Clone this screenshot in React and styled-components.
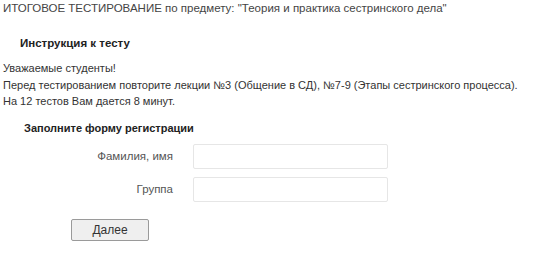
import styled, { createGlobalStyle } from "styled-components"

const Global = createGlobalStyle`
body{
    margin: 0;
    background: #fff;
    font-family: "Liberation Sans", Arial, sans-serif;
    font-size: 11.5px;
    color: #333;
}
`

const Page = styled.div`
    padding: 1px 0 0 3px;
    white-space: nowrap;
`

const Title = styled.div`
    line-height: 14px;
    color: #444;
`

const SectionTitle = styled.h2`
    margin: ${props => props.top}px 0 0 ${props => props.indent}px;
    font-size: ${props => props.size}px;
    font-weight: bold;
    line-height: 14px;
    color: #222;
`

const Notice = styled.div`
    margin-top: 10px;
    font-size: 11px;
    p{
        margin: 0;
        line-height: 16.5px;
    }
`

const Form = styled.form`
    display: grid;
    grid-template-columns: 170px 195px;
    column-gap: 20px;
    row-gap: 8px;
    align-items: center;
    margin-top: 9px;
    label{
        text-align: right;
        color: #555;
    }
    input{
        height: 25px;
        box-sizing: border-box;
        border: 1px solid #e6e6e6;
        border-radius: 2px;
        margin: 0;
    }
`

const Button = styled.button`
    display: block;
    margin: 17px 0 0 68px;
    width: 78px;
    height: 22px;
    background: #efefef;
    border: 1px solid #9a9a9a;
    border-radius: 2px;
    font-family: inherit;
    font-size: 12px;
    color: #333;
    padding: 0;
`

export default function App(){
    return(
        <Page>
            <Global />
            <Title>ИТОГОВОЕ ТЕСТИРОВАНИЕ по предмету: "Теория и практика сестринского дела"</Title>
            <SectionTitle top={21} indent={17} size={11.5}>Инструкция к тесту</SectionTitle>
            <Notice>
                <p>Уважаемые студенты!</p>
                <p>Перед тестированием повторите лекции №3 (Общение в СД), №7-9 (Этапы сестринского процесса).</p>
                <p>На 12 тестов Вам дается 8 минут.</p>
            </Notice>
            <SectionTitle top={11} indent={21} size={11}>Заполните форму регистрации</SectionTitle>
            <Form>
                <label>Фамилия, имя</label>
                <input type="text" />
                <label>Группа</label>
                <input type="text" />
            </Form>
            <Button type="button">Далее</Button>
        </Page>
    )
}
